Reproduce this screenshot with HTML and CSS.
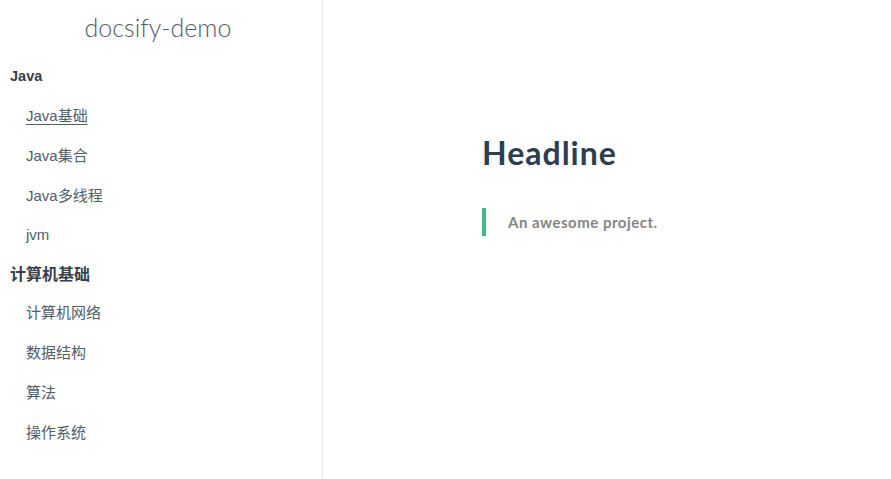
FILE: index.html
```html
<!DOCTYPE html>
<html lang="zh-CN">
<head>
<meta charset="utf-8">
<title>docsify-demo</title>
<link rel="stylesheet" href="styles.css">
</head>
<body>
<div class="app">
  <aside class="sidebar">
    <h1 class="app-name"><a href="#/">docsify-demo</a></h1>
    <nav class="sidebar-nav">
      <p class="group first">Java</p>
      <ul>
        <li><a class="active" href="#/java/base">Java基础</a></li>
        <li><a href="#/java/collection">Java集合</a></li>
        <li><a href="#/java/thread">Java多线程</a></li>
        <li><a href="#/java/jvm">jvm</a></li>
      </ul>
      <p class="group second">计算机基础</p>
      <ul>
        <li><a href="#/cs/network">计算机网络</a></li>
        <li><a href="#/cs/ds">数据结构</a></li>
        <li><a href="#/cs/algo">算法</a></li>
        <li><a href="#/cs/os">操作系统</a></li>
      </ul>
    </nav>
  </aside>
  <main class="content">
    <article class="markdown-section">
      <h1 class="headline">Headline</h1>
      <blockquote class="quote"><p>An awesome project.</p></blockquote>
    </article>
  </main>
</div>
</body>
</html>
```

FILE: styles.css
```css
* { box-sizing: border-box; }
html, body { margin: 0; padding: 0; height: 100%; }
body {
  font-family: "Lato", "Noto Sans CJK SC", sans-serif;
  color: #34495e;
  background: #fff;
  -webkit-font-smoothing: antialiased;
}
a { text-decoration: none; color: inherit; }
.app {
  display: flex;
  height: 479px;
  overflow: hidden;
}
.sidebar {
  width: 323px;
  flex: none;
  border-right: 1px solid rgba(0,0,0,.07);
  display: flex;
  flex-direction: column;
}
.app-name {
  margin: 0;
  height: 54px;
  display: flex;
  align-items: center;
  justify-content: center;
  font-size: 25px;
  font-weight: 300;
  color: #505d6b;
  padding-right: 6px;
}
.sidebar-nav { display: flex; flex-direction: column; }
.group {
  margin: 0;
  height: 36px;
  display: flex;
  align-items: center;
  padding-left: 10px;
  font-weight: 700;
  color: #364149;
  font-family: "Liberation Sans", "Noto Sans CJK SC", sans-serif;
}
.group.first { font-size: 14.5px; margin-top: 4px; margin-bottom: 1px; }
.group.second { font-size: 16px; margin-top: 0.5px; margin-bottom: 1.5px; font-family: "Noto Sans CJK SC", sans-serif; }
.sidebar-nav ul { list-style: none; margin: 0; padding: 0; }
.sidebar-nav li {
  height: 39.75px;
  display: flex;
  align-items: center;
  padding-left: 26px;
  font-size: 15px;
  color: #505d6b;
}
.sidebar-nav li a { font-family: "Liberation Sans", "Noto Sans CJK SC", sans-serif; }
.sidebar-nav li a.active { text-decoration: underline; text-underline-offset: 3px; text-decoration-thickness: 1px; }
.content {
  flex: 1;
  padding: 131px 0 0 159px;
}
.markdown-section { max-width: 400px; }
.headline {
  margin: 0;
  font-size: 32px;
  line-height: 44px;
  font-weight: 700;
  letter-spacing: 1px;
  color: #2c3e50;
}
.quote {
  margin: 33px 0 0 0;
  border-left: 4px solid #42b983;
  padding: 0 0 0 22px;
  height: 28px;
  display: flex;
  align-items: center;
}
.quote p {
  margin: 0;
  font-size: 15px;
  font-weight: 700;
  letter-spacing: 0.5px;
  color: #858585;
}
```
